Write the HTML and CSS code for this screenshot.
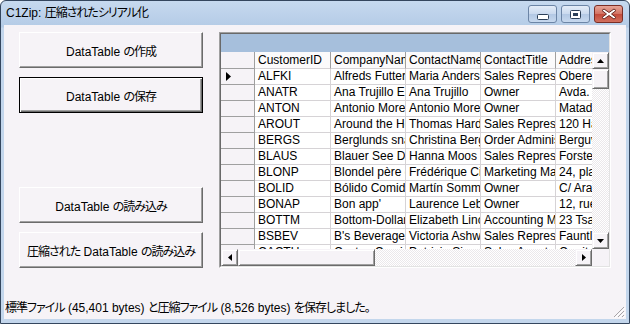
FILE: index.html
```html
<!DOCTYPE html>
<html lang="ja">
<head>
    <meta charset="UTF-8">
    <meta name="viewport" content="width=device-width, initial-scale=1.0">
    <title>C1Zip: 圧縮されたシリアル化</title>
    <link rel="stylesheet" href="styles.css">
</head>
<body>
    <div class="window">
        <div class="titlebar">
            <span class="title">C1Zip: <span class="jp">圧縮されたシリアル化</span></span>
            <div class="caption-buttons">
                <span class="cap-btn">
                    <svg width="12" height="6" viewBox="0 0 12 6"><rect x="0.5" y="0.5" width="11" height="5" rx="1" fill="#fff" stroke="#2c3f58"/></svg>
                </span>
                <span class="cap-btn">
                    <svg width="11" height="9" viewBox="0 0 11 9"><rect x="0.5" y="0.5" width="10" height="8" rx="1" fill="#fff" stroke="#2c3f58"/><rect x="3" y="3" width="5" height="3" fill="#2c3f58"/></svg>
                </span>
                <span class="cap-btn close">
                    <svg width="16" height="12" viewBox="0 0 16 12"><path d="M3 1 L8 4.5 L13 1 L15 2.5 L10.5 6 L15 9.5 L13 11 L8 7.5 L3 11 L1 9.5 L5.5 6 L1 2.5 Z" fill="#fff" stroke="#5a1f18" stroke-width="0.9"/></svg>
                </span>
            </div>
        </div>

        <div class="client">
            <div class="main">
                <div class="button-col">
                    <div class="btn-group">
                        <button class="btn">DataTable <span class="jp">の作成</span></button>
                        <button class="btn default">DataTable <span class="jp">の保存</span></button>
                    </div>
                    <div class="btn-group">
                        <button class="btn">DataTable <span class="jp">の読み込み</span></button>
                        <button class="btn"><span class="jp">圧縮された</span> DataTable <span class="jp">の読み込み</span></button>
                    </div>
                </div>

                <div class="datagrid">
                    <div class="dg-inner">
                        <div class="dg-caption"></div>
                        <div class="dg-body">
                            <table class="dg-table">
                                <colgroup>
                                    <col class="c-rowhead">
                                    <col class="c-id">
                                    <col class="c-data">
                                    <col class="c-data">
                                    <col class="c-data">
                                    <col class="c-data">
                                </colgroup>
                                <thead>
                                    <tr>
                                        <th class="rowhead"></th>
                                        <th>CustomerID</th>
                                        <th>CompanyName</th>
                                        <th>ContactName</th>
                                        <th>ContactTitle</th>
                                        <th>Address</th>
                                    </tr>
                                </thead>
                                <tbody>
                                    <tr>
                                        <td class="rowhead"><svg class="marker" width="6" height="9" viewBox="0 0 6 9"><path d="M0 0 L5 4.5 L0 9 Z" fill="#000"/></svg></td>
                                        <td>ALFKI</td><td>Alfreds Futterkiste</td><td>Maria Anders</td><td>Sales Representative</td><td>Obere Str. 57</td>
                                    </tr>
                                    <tr>
                                        <td class="rowhead"></td>
                                        <td>ANATR</td><td>Ana Trujillo Emparedados y helados</td><td>Ana Trujillo</td><td>Owner</td><td>Avda. de la Constitución 2222</td>
                                    </tr>
                                    <tr>
                                        <td class="rowhead"></td>
                                        <td>ANTON</td><td>Antonio Moreno Taquería</td><td>Antonio Moreno</td><td>Owner</td><td>Mataderos 2312</td>
                                    </tr>
                                    <tr>
                                        <td class="rowhead"></td>
                                        <td>AROUT</td><td>Around the Horn</td><td>Thomas Hardy</td><td>Sales Representative</td><td>120 Hanover Sq.</td>
                                    </tr>
                                    <tr>
                                        <td class="rowhead"></td>
                                        <td>BERGS</td><td>Berglunds snabbköp</td><td>Christina Berglund</td><td>Order Administrator</td><td>Berguvsvägen 8</td>
                                    </tr>
                                    <tr>
                                        <td class="rowhead"></td>
                                        <td>BLAUS</td><td>Blauer See Delikatessen</td><td>Hanna Moos</td><td>Sales Representative</td><td>Forsterstr. 57</td>
                                    </tr>
                                    <tr>
                                        <td class="rowhead"></td>
                                        <td>BLONP</td><td>Blondel père et fils</td><td>Frédérique Citeaux</td><td>Marketing Manager</td><td>24, place Kléber</td>
                                    </tr>
                                    <tr>
                                        <td class="rowhead"></td>
                                        <td>BOLID</td><td>Bólido Comidas preparadas</td><td>Martín Sommer</td><td>Owner</td><td>C/ Araquil, 67</td>
                                    </tr>
                                    <tr>
                                        <td class="rowhead"></td>
                                        <td>BONAP</td><td>Bon app'</td><td>Laurence Lebihan</td><td>Owner</td><td>12, rue des Bouchers</td>
                                    </tr>
                                    <tr>
                                        <td class="rowhead"></td>
                                        <td>BOTTM</td><td>Bottom-Dollar Markets</td><td>Elizabeth Lincoln</td><td>Accounting Manager</td><td>23 Tsawassen Blvd.</td>
                                    </tr>
                                    <tr>
                                        <td class="rowhead"></td>
                                        <td>BSBEV</td><td>B's Beverages</td><td>Victoria Ashworth</td><td>Sales Representative</td><td>Fauntleroy Circus</td>
                                    </tr>
                                    <tr>
                                        <td class="rowhead"></td>
                                        <td>CACTU</td><td>Cactus Comidas para llevar</td><td>Patricio Simpson</td><td>Sales Agent</td><td>Cerrito 333</td>
                                    </tr>
                                </tbody>
                            </table>
                        </div>

                        <div class="vscroll">
                            <span class="sb-btn"><svg width="7" height="4" viewBox="0 0 7 4"><path d="M0 4 L3.5 0 L7 4 Z" fill="#000"/></svg></span>
                            <span class="sb-thumb v"></span>
                            <span class="sb-track"></span>
                            <span class="sb-btn"><svg width="7" height="4" viewBox="0 0 7 4"><path d="M0 0 L7 0 L3.5 4 Z" fill="#000"/></svg></span>
                        </div>
                        <div class="hscroll">
                            <span class="sb-btn"><svg width="4" height="7" viewBox="0 0 4 7"><path d="M4 0 L4 7 L0 3.5 Z" fill="#000"/></svg></span>
                            <span class="sb-thumb h"></span>
                            <span class="sb-track"></span>
                            <span class="sb-btn"><svg width="4" height="7" viewBox="0 0 4 7"><path d="M0 0 L4 3.5 L0 7 Z" fill="#000"/></svg></span>
                        </div>
                        <div class="corner"></div>
                    </div>
                </div>
            </div>

            <div class="status"><span class="jp">標準ファイル</span> (45,401 bytes) <span class="jp">と圧縮ファイル</span> (8,526 bytes) <span class="jp">を保存しました。</span></div>

            <svg class="grip" width="12" height="12" viewBox="0 0 12 12">
                <path d="M11 1 L1 11 M11 5 L5 11 M11 9 L9 11" stroke="#a8a4a8" stroke-width="1"/>
                <path d="M12 2 L2 12 M12 6 L6 12 M12 10 L10 12" stroke="#fff" stroke-width="1"/>
            </svg>
        </div>
    </div>
</body>
</html>
```

FILE: styles.css
```css
body {
    margin: 0;
    font-family: "Liberation Sans", "Noto Sans CJK JP", sans-serif;
    font-size: 12px;
    font-feature-settings: "palt";
    color: #000;
    background: #fff;
}
.jp {
    letter-spacing: -1px;
}
.window {
    width: 630px;
    height: 324px;
    box-sizing: border-box;
    display: flex;
    flex-direction: column;
    border: 1px solid #34465e;
    border-radius: 6px 6px 0 0;
    background: linear-gradient(#c6d9ef, #b4cbe6 26px, #c3d6ec 27px, #c3d6ec);
    padding: 0 3px 4px 3px;
}
.titlebar {
    height: 24px;
    display: flex;
    align-items: flex-start;
    margin: 0 -3px;
    padding: 0 6px 0 5px;
}
.title {
    line-height: 24px;
    font-size: 12px;
}
.caption-buttons {
    margin-left: auto;
    padding-top: 4px;
    display: flex;
    gap: 4px;
}
.cap-btn {
    width: 29px;
    height: 18px;
    box-sizing: border-box;
    border: 1px solid #6c85a6;
    border-radius: 3px;
    background: linear-gradient(#e4edf8, #c9d9ee 50%, #b3c8e4 51%, #c6d8ee);
    display: flex;
    align-items: center;
    justify-content: center;
}
.cap-btn:first-child svg {
    margin-top: 6px;
}
.cap-btn.close {
    border-color: #7b2e25;
    background: linear-gradient(#e7a597, #d27262 50%, #c24a3a 51%, #d2705e);
}
.client {
    flex: 1;
    position: relative;
    display: flex;
    flex-direction: column;
    background: #f6f3f7;
}
.main {
    display: flex;
    gap: 16px;
    padding: 7px 15px 0 15px;
}
.button-col {
    width: 184px;
    height: 236px;
    display: flex;
    flex-direction: column;
    justify-content: space-between;
}
.btn-group {
    display: flex;
    flex-direction: column;
    gap: 9px;
}
.btn {
    height: 36px;
    margin: 0;
    padding: 0;
    font-family: inherit;
    font-size: 12px;
    font-feature-settings: "palt";
    color: #000;
    background: #f6f3f7;
    border: 1px solid;
    border-color: #fff #6b6b6b #6b6b6b #fff;
    box-shadow: inset -1px -1px 0 #a0a0a0;
}
.btn.default {
    border: 1px solid #000;
    box-shadow: inset 1px 1px 0 #fff, inset -1px -1px 0 #6b6b6b, inset -2px -2px 0 #a0a0a0;
}
.datagrid {
    width: 392px;
    height: 236px;
    box-sizing: border-box;
    border: 1px solid;
    border-color: #a0a0a0 #fff #fff #a0a0a0;
}
.dg-inner {
    height: 100%;
    box-sizing: border-box;
    border: 1px solid;
    border-color: #696969 #e3e3e3 #e3e3e3 #696969;
    display: grid;
    grid-template-columns: 371px 17px;
    grid-template-rows: 18px 1fr 17px;
}
.dg-caption {
    grid-column: 1 / -1;
    background: #a6bfdc;
}
.dg-body {
    overflow: hidden;
    background: #f6f3f7;
}
.dg-table {
    table-layout: fixed;
    border-collapse: separate;
    border-spacing: 0;
    width: 410px;
}
.c-rowhead { width: 34px; }
.c-id { width: 76px; }
.c-data { width: 75px; }
.dg-table th,
.dg-table td {
    padding: 0 0 0 3px;
    white-space: nowrap;
    overflow: hidden;
    text-overflow: clip;
    text-align: left;
    font-weight: normal;
    line-height: 15px;
    height: 15px;
    border-right: 1px solid #d6d3d6;
    border-bottom: 1px solid #d6d3d6;
}
.dg-table th {
    height: 16px;
    line-height: 16px;
    background: #fbfafb;
    border-right-color: #a0a0a0;
}
.dg-table td {
    background: #fff;
}
.dg-table .rowhead {
    background: #f6f3f7;
    border-right-color: #a0a0a0;
    border-bottom-color: #a0a0a0;
    padding-left: 5px;
}
.marker {
    display: block;
}
.vscroll,
.hscroll {
    display: flex;
}
.vscroll {
    flex-direction: column;
}
.sb-btn {
    width: 17px;
    height: 17px;
    flex: none;
    box-sizing: border-box;
    display: flex;
    align-items: center;
    justify-content: center;
    background: #f6f3f7;
    border: 1px solid;
    border-color: #f6f3f7 #6b6b6b #6b6b6b #f6f3f7;
    box-shadow: inset 1px 1px 0 #fff, inset -1px -1px 0 #a0a0a0;
}
.sb-thumb {
    flex: none;
    box-sizing: border-box;
    background: #f6f3f7;
    border: 1px solid;
    border-color: #f6f3f7 #6b6b6b #6b6b6b #f6f3f7;
    box-shadow: inset 1px 1px 0 #fff, inset -1px -1px 0 #a0a0a0;
}
.sb-thumb.v {
    height: 20px;
}
.sb-thumb.h {
    width: 137px;
}
.sb-track {
    flex: 1;
    background: repeating-conic-gradient(#fff 0 25%, #ebe8eb 0 50%) 0 0 / 2px 2px;
}
.corner {
    background: #f6f3f7;
}
.status {
    margin-top: auto;
    height: 22px;
    line-height: 22px;
    padding-left: 1px;
}
.grip {
    position: absolute;
    right: 1px;
    bottom: 1px;
}
```
